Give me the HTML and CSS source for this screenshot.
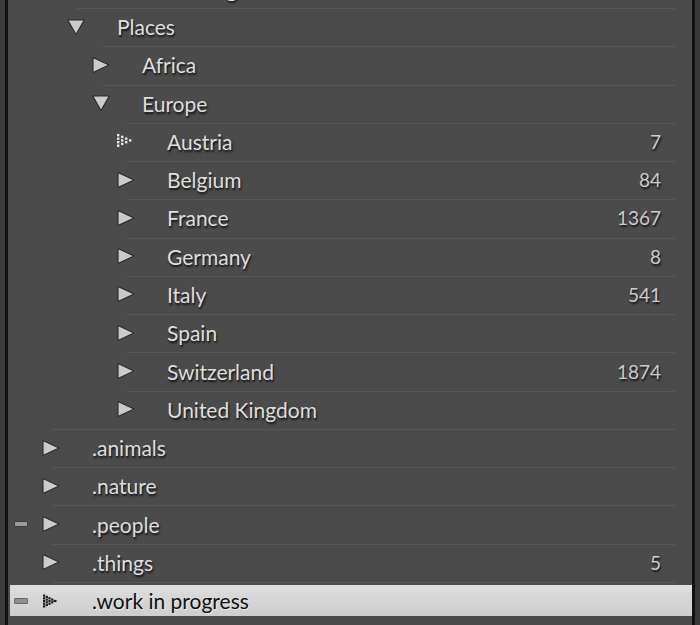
FILE: index.html
```html
<!DOCTYPE html>
<html>
<head>
<meta charset="utf-8">
<link rel="stylesheet" href="styles.css">
</head>
<body>
<div class="frame">
  <div class="edge-l"></div>
  <div class="panel">
    <div class="tree">
      <div class="row l1"><div class="sep"></div><div class="content"><span class="mark"></span><span class="tw"></span><span class="label">Street Hiking</span><span class="count"></span></div></div>
      <div class="row l1"><div class="sep"></div><div class="content"><span class="mark"></span><svg class="tw" viewBox="0 0 18 16"><polygon class="tri" points="0.8,1 17.2,1 9,15.5"/></svg><span class="label">Places</span><span class="count"></span></div></div>
      <div class="row l2"><div class="sep"></div><div class="content"><span class="mark"></span><svg class="tw" viewBox="0 0 18 16"><polygon class="tri" points="1,0.6 17,8 1,15.4"/></svg><span class="label">Africa</span><span class="count"></span></div></div>
      <div class="row l2"><div class="sep"></div><div class="content"><span class="mark"></span><svg class="tw" viewBox="0 0 18 16"><polygon class="tri" points="0.8,1 17.2,1 9,15.5"/></svg><span class="label">Europe</span><span class="count"></span></div></div>
      <div class="row l3"><div class="sep"></div><div class="content"><span class="mark"></span><svg class="tw" viewBox="0 0 18 16"><g class="dots"><rect x="0" y="1" width="2.4" height="2.4"/><rect x="0" y="4.5" width="2.4" height="2.4"/><rect x="0" y="8" width="2.4" height="2.4"/><rect x="0" y="11.5" width="2.4" height="2.4"/><rect x="4" y="2.7" width="2.4" height="2.4"/><rect x="4" y="6.2" width="2.4" height="2.4"/><rect x="4" y="9.7" width="2.4" height="2.4"/><rect x="8" y="4.5" width="2.4" height="2.4"/><rect x="8" y="8" width="2.4" height="2.4"/><rect x="12" y="6.2" width="2.4" height="2.4"/></g></svg><span class="label">Austria</span><span class="count">7</span></div></div>
      <div class="row l3"><div class="sep"></div><div class="content"><span class="mark"></span><svg class="tw" viewBox="0 0 18 16"><polygon class="tri" points="1,0.6 17,8 1,15.4"/></svg><span class="label">Belgium</span><span class="count">84</span></div></div>
      <div class="row l3"><div class="sep"></div><div class="content"><span class="mark"></span><svg class="tw" viewBox="0 0 18 16"><polygon class="tri" points="1,0.6 17,8 1,15.4"/></svg><span class="label">France</span><span class="count">1367</span></div></div>
      <div class="row l3"><div class="sep"></div><div class="content"><span class="mark"></span><svg class="tw" viewBox="0 0 18 16"><polygon class="tri" points="1,0.6 17,8 1,15.4"/></svg><span class="label">Germany</span><span class="count">8</span></div></div>
      <div class="row l3"><div class="sep"></div><div class="content"><span class="mark"></span><svg class="tw" viewBox="0 0 18 16"><polygon class="tri" points="1,0.6 17,8 1,15.4"/></svg><span class="label">Italy</span><span class="count">541</span></div></div>
      <div class="row l3"><div class="sep"></div><div class="content"><span class="mark"></span><svg class="tw" viewBox="0 0 18 16"><polygon class="tri" points="1,0.6 17,8 1,15.4"/></svg><span class="label">Spain</span><span class="count"></span></div></div>
      <div class="row l3"><div class="sep"></div><div class="content"><span class="mark"></span><svg class="tw" viewBox="0 0 18 16"><polygon class="tri" points="1,0.6 17,8 1,15.4"/></svg><span class="label">Switzerland</span><span class="count">1874</span></div></div>
      <div class="row l3"><div class="sep"></div><div class="content"><span class="mark"></span><svg class="tw" viewBox="0 0 18 16"><polygon class="tri" points="1,0.6 17,8 1,15.4"/></svg><span class="label">United Kingdom</span><span class="count"></span></div></div>
      <div class="row l0"><div class="sep"></div><div class="content"><span class="mark"></span><svg class="tw" viewBox="0 0 18 16"><polygon class="tri" points="1,0.6 17,8 1,15.4"/></svg><span class="label">.animals</span><span class="count"></span></div></div>
      <div class="row l0"><div class="sep"></div><div class="content"><span class="mark"></span><svg class="tw" viewBox="0 0 18 16"><polygon class="tri" points="1,0.6 17,8 1,15.4"/></svg><span class="label">.nature</span><span class="count"></span></div></div>
      <div class="row l0"><div class="sep"></div><div class="content"><span class="mark minus"></span><svg class="tw" viewBox="0 0 18 16"><polygon class="tri" points="1,0.6 17,8 1,15.4"/></svg><span class="label">.people</span><span class="count"></span></div></div>
      <div class="row l0"><div class="sep"></div><div class="content"><span class="mark"></span><svg class="tw" viewBox="0 0 18 16"><polygon class="tri" points="1,0.6 17,8 1,15.4"/></svg><span class="label">.things</span><span class="count">5</span></div></div>
      <div class="row l0 selected"><div class="sep"></div><div class="content"><span class="mark minus"></span><svg class="tw" viewBox="0 0 18 16"><g class="dots dark"><rect x="1" y="1.5" width="2.2" height="2.2"/><rect x="1" y="4.2" width="2.2" height="2.2"/><rect x="1" y="6.9" width="2.2" height="2.2"/><rect x="1" y="9.6" width="2.2" height="2.2"/><rect x="1" y="12.3" width="2.2" height="2.2"/><rect x="3.7" y="2.8" width="2.2" height="2.2"/><rect x="3.7" y="5.5" width="2.2" height="2.2"/><rect x="3.7" y="8.2" width="2.2" height="2.2"/><rect x="3.7" y="10.9" width="2.2" height="2.2"/><rect x="6.4" y="4.2" width="2.2" height="2.2"/><rect x="6.4" y="6.9" width="2.2" height="2.2"/><rect x="6.4" y="9.6" width="2.2" height="2.2"/><rect x="9.1" y="5.5" width="2.2" height="2.2"/><rect x="9.1" y="8.2" width="2.2" height="2.2"/><rect x="11.5" y="6.9" width="3" height="2.2"/></g></svg><span class="label">.work in progress</span><span class="count"></span></div></div>
    </div>
  </div>
  <div class="edge-r"></div>
</div>
</body>
</html>
```
FILE: styles.css
```css
html, body {
  margin: 0;
  padding: 0;
  background: #3b3b3b;
}
.frame {
  display: flex;
  width: 700px;
  height: 625px;
  overflow: hidden;
}
.edge-l {
  width: 5px;
  flex: none;
  background: #3c3c3c;
  border-right: 3px solid #111;
}
.edge-r {
  width: 5px;
  flex: none;
  background: #383838;
  border-left: 3px solid #111;
}
.panel {
  flex: 1;
  background: #4b4b4b;
  overflow: hidden;
}
.tree {
  margin-top: -30.27px;
}
.row {
  height: 38.27px;
  display: flex;
  flex-direction: column;
  box-sizing: border-box;
}
.sep {
  height: 1px;
  flex: none;
  background: #585858;
  margin-right: 17px;
}
.content {
  flex: 1;
  display: flex;
  align-items: center;
  padding-right: 31px;
  padding-bottom: 2px;
  font-family: Lato, "Open Sans", sans-serif;
  font-size: 21px;
  color: #dedede;
  text-shadow: 1px 2px 2px rgba(0, 0, 0, 0.75);
}
.mark {
  width: 14px;
  height: 6px;
  margin-left: 6px;
  flex: none;
  box-sizing: border-box;
}
.mark.minus {
  background: #9a9a9a;
  border: 1px solid #3a3a3a;
  border-radius: 1px;
}
.tw {
  width: 18px;
  height: 16px;
  flex: none;
}
.tri {
  fill: #cbcbcb;
  stroke: #2a2a2a;
  stroke-width: 1.1;
  stroke-linejoin: round;
}
.dots rect {
  fill: #e6e6e6;
}
.dots.dark rect {
  fill: #1c1c1c;
}
.label {
  margin-left: 31px;
  flex: 1;
  white-space: nowrap;
}
.count {
  color: #cacaca;
  font-size: 19px;
}
.l0 .sep { margin-left: 44px; }
.l1 .sep { margin-left: 69px; }
.l2 .sep { margin-left: 94px; }
.l3 .sep { margin-left: 119px; }
.l0 .tw { margin-left: 14px; }
.l1 .tw { margin-left: 39px; }
.l2 .tw { margin-left: 64px; }
.l3 .tw { margin-left: 89px; }
.l3 .tw + .label, .l2 .tw + .label, .l1 .tw + .label, .l0 .tw + .label { margin-left: 32px; }
.selected .content {
  margin: 2px 0 4px 2px;
  padding-right: 29px;
  padding-bottom: 0;
  background: linear-gradient(#dedede, #cdcdcd);
  color: #111;
  text-shadow: 1px 1px 1px rgba(255, 255, 255, 0.5);
}
.selected .mark {
  margin-left: 4px;
  background: #8f8f8f;
  border-color: #6a6a6a;
}
.selected .tw {
  margin-left: 14px;
}
```
